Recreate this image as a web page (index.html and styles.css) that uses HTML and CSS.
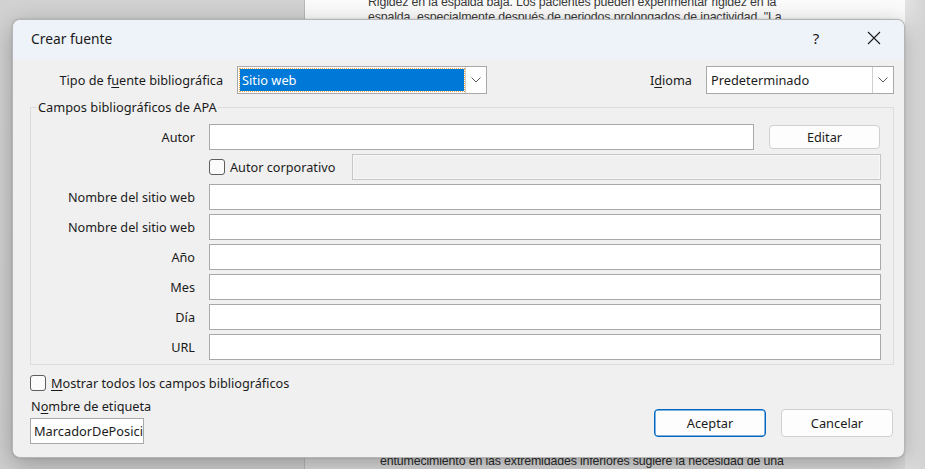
FILE: index.html
```html
<!DOCTYPE html>
<html lang="es">
<head>
<meta charset="utf-8">
<title>Crear fuente</title>
<link rel="stylesheet" href="styles.css">
</head>
<body>
<div class="desk">
  <div class="side-left"></div>
  <div class="doc">
    <div class="page page-top">
      <p class="doc-text">Rigidez en la espalda baja. Los pacientes pueden experimentar rigidez en la<br>espalda, especialmente después de periodos prolongados de inactividad. "La</p>
    </div>
    <div class="page-break"></div>
    <div class="page page-bottom">
      <p class="doc-text doc-text-bottom">entumecimiento en las extremidades inferiores sugiere la necesidad de una</p>
    </div>
  </div>
  <div class="side-right"></div>
</div>

<div class="dialog">
  <div class="titlebar">
    <span class="title">Crear fuente</span>
    <span class="help">?</span>
    <span class="close">
      <svg width="14" height="14" viewBox="0 0 14 14"><path d="M1 1 L13 13 M13 1 L1 13" stroke="#1a1a1a" stroke-width="1.1" fill="none"/></svg>
    </span>
  </div>
  <div class="body">
    <div class="top-row">
      <span class="lbl lbl-type">Tipo de f<u>u</u>ente bibliográfica</span>
      <div class="combo combo-type">
        <span class="combo-value selected">Sitio web</span>
        <span class="combo-btn"><svg width="10" height="6" viewBox="0 0 10 6"><path d="M0.5 0.5 L5 5 L9.5 0.5" stroke="#5a5a5a" stroke-width="1" fill="none"/></svg></span>
      </div>
      <span class="spacer"></span>
      <span class="lbl">I<u>d</u>ioma</span>
      <div class="combo combo-lang">
        <span class="combo-value">Predeterminado</span>
        <span class="combo-btn"><svg width="10" height="6" viewBox="0 0 10 6"><path d="M0.5 0.5 L5 5 L9.5 0.5" stroke="#5a5a5a" stroke-width="1" fill="none"/></svg></span>
      </div>
    </div>

    <fieldset class="group">
      <legend>Campos bibliográficos de APA</legend>
      <div class="fields">
        <span class="flabel">Autor</span>
        <div class="with-btn">
          <span class="input grow"></span>
          <span class="btn btn-edit">Editar</span>
        </div>

        <span></span>
        <div class="corp-row">
          <span class="check"></span>
          <span class="corp-label">Autor corporativo</span>
          <span class="input disabled grow"></span>
        </div>

        <span class="flabel">Nombre del sitio web</span>
        <span class="input"></span>
        <span class="flabel">Nombre del sitio web</span>
        <span class="input"></span>
        <span class="flabel">Año</span>
        <span class="input"></span>
        <span class="flabel">Mes</span>
        <span class="input"></span>
        <span class="flabel">Día</span>
        <span class="input"></span>
        <span class="flabel">URL</span>
        <span class="input"></span>
      </div>
    </fieldset>

    <div class="bottom">
      <div class="bottom-left">
        <div class="show-all">
          <span class="check"></span>
          <span><u>M</u>ostrar todos los campos bibliográficos</span>
        </div>
        <span class="tag-label">N<u>o</u>mbre de etiqueta</span>
        <span class="input tag-input">MarcadorDePosición1</span>
      </div>
      <div class="buttons">
        <span class="btn btn-main btn-ok">Aceptar</span>
        <span class="btn btn-main">Cancelar</span>
      </div>
    </div>
  </div>
</div>
</body>
</html>
```

FILE: styles.css
```css
* { box-sizing: border-box; }

html, body {
  margin: 0;
  padding: 0;
}

body {
  width: 925px;
  height: 469px;
  overflow: hidden;
  position: relative;
  font-family: "Noto Sans", "Open Sans", sans-serif;
  font-size: 12.7px;
  color: #1b1b1b;
  background: #d6d6d6;
}

u { text-decoration-thickness: 1px; text-underline-offset: 2px; }

/* ---------- background document ---------- */
.desk {
  display: flex;
  height: 469px;
}

.side-left {
  width: 305px;
  background: linear-gradient(to bottom, #d2d2d2, #cfcfcf);
  border-right: 1px solid #b9b9b9;
}

.doc {
  width: 600px;
  display: flex;
  flex-direction: column;
}

.page {
  background: #fbfbfb;
}

.page-top {
  height: 373px;
}

.page-break {
  height: 10px;
  background: #c4c4c4;
}

.page-bottom {
  flex: 1;
  background: #d9d9d9;
}

.doc-text {
  margin: 0;
  padding-left: 63px;
  margin-top: -5px;
  font-family: "Liberation Sans", Arial, sans-serif;
  font-size: 12.4px;
  line-height: 15px;
  color: #3a3a3a;
  letter-spacing: -0.15px;
}

.doc-text-bottom {
  margin-top: 71px;
  padding-left: 75px;
  color: #2a2a2a;
}

.side-right {
  flex: 1;
  background: linear-gradient(to right, #e3e3e3, #d4d4d4);
}

/* ---------- dialog ---------- */
.dialog {
  position: absolute;
  left: 12px;
  top: 19px;
  width: 893px;
  height: 439px;
  background: #f0f0f0;
  border: 1px solid #b5b5b5;
  border-radius: 8px;
  box-shadow: 0 6px 24px rgba(0, 0, 0, 0.28), 0 0 2px rgba(0, 0, 0, 0.2);
  overflow: hidden;
  display: flex;
  flex-direction: column;
}

.titlebar {
  height: 39px;
  background: #eef3f9;
  display: flex;
  align-items: center;
  padding-left: 18px;
  padding-bottom: 3px;
  flex-shrink: 0;
}

.title {
  font-size: 13.8px;
  color: #1a1a1a;
  flex: 1;
}

.help {
  font-size: 15px;
  width: 70px;
  text-align: center;
  color: #1a1a1a;
}

.close {
  width: 46px;
  height: 36px;
  display: flex;
  align-items: center;
  justify-content: center;
  margin-right: 7px;
}

.body {
  flex: 1;
  padding: 7px 10px 0 0;
  display: flex;
  flex-direction: column;
}

/* top row */
.top-row {
  display: flex;
  align-items: center;
  height: 28px;
}

.lbl-type {
  width: 210px;
  text-align: right;
  margin-right: 14px;
  white-space: nowrap;
}

.combo {
  height: 28px;
  border: 1px solid #a8a8a8;
  background: #ffffff;
  display: flex;
  align-items: stretch;
}

.combo-type { width: 250px; }
.combo-lang { width: 188px; margin-left: 14px; }

.combo-value {
  flex: 1;
  display: flex;
  align-items: center;
  padding-left: 4px;
  font-size: 12.8px;
}

.combo-value.selected {
  margin: 2px 1px 2px 2px;
  background: #0078d7;
  color: #ffffff;
  outline: 1px dotted #f0a040;
  padding-left: 2px;
}

.combo-btn {
  width: 21px;
  border-left: 1px solid #cfcfcf;
  display: flex;
  align-items: center;
  justify-content: center;
  background: #ffffff;
}

.spacer { flex: 1; }

/* group box */
.group {
  margin: 4px 0 0 17px;
  padding: 8px 12px 4px 0;
  border: 1px solid #dcdcdc;
  border-radius: 0;
  min-width: 0;
}

.group legend {
  padding: 0 1px;
  margin-left: 6px;
  font-size: 12.8px;
}

.fields {
  display: grid;
  grid-template-columns: 164px 1fr;
  column-gap: 14px;
  grid-auto-rows: 26px;
  row-gap: 4px;
  align-items: center;
}

.flabel {
  text-align: right;
  white-space: nowrap;
}

.input {
  display: flex;
  align-items: center;
  height: 26px;
  background: #ffffff;
  border: 1px solid #a9a9a9;
}

.input.disabled {
  height: 26px;
  background: #f0f0f0;
  border: 1px solid #c6c6c6;
  box-shadow: inset 0 0 0 1px #f8f8f8;
}

.grow { flex: 1; }

.with-btn {
  display: flex;
  align-items: center;
  gap: 15px;
}

.btn {
  display: flex;
  align-items: center;
  justify-content: center;
  background: #fdfdfd;
  border: 1px solid #d0d0d0;
  border-radius: 4px;
}

.btn-edit {
  width: 111px;
  height: 24px;
  margin-right: 1px;
}

.corp-row {
  display: flex;
  align-items: center;
}

.check {
  width: 16px;
  height: 16px;
  border: 1px solid #5d5d5d;
  border-radius: 3px;
  background: #fbfbfb;
  flex-shrink: 0;
}

.corp-label {
  margin-left: 5px;
  width: 122px;
  white-space: nowrap;
}

/* bottom */
.bottom {
  display: flex;
  justify-content: space-between;
  margin-left: 17px;
  margin-top: 9px;
}

.bottom-left {
  display: flex;
  flex-direction: column;
  align-items: flex-start;
}

.show-all {
  display: flex;
  align-items: center;
  gap: 5px;
  height: 18px;
  white-space: nowrap;
}

.tag-label {
  margin-top: 6px;
  margin-left: 1px;
  line-height: 16px;
}

.tag-input {
  margin-top: 4px;
  width: 114px;
  padding-left: 3px;
  white-space: nowrap;
  overflow: hidden;
  font-size: 12.8px;
}

.buttons {
  display: flex;
  gap: 15px;
  margin-top: 35px;
  margin-right: 1px;
}

.btn-main {
  width: 112px;
  height: 28px;
  font-size: 12.8px;
}

.btn-ok {
  border: 1px solid #0067c0;
  box-shadow: inset 0 0 0 0.5px #0067c0;
}
```
